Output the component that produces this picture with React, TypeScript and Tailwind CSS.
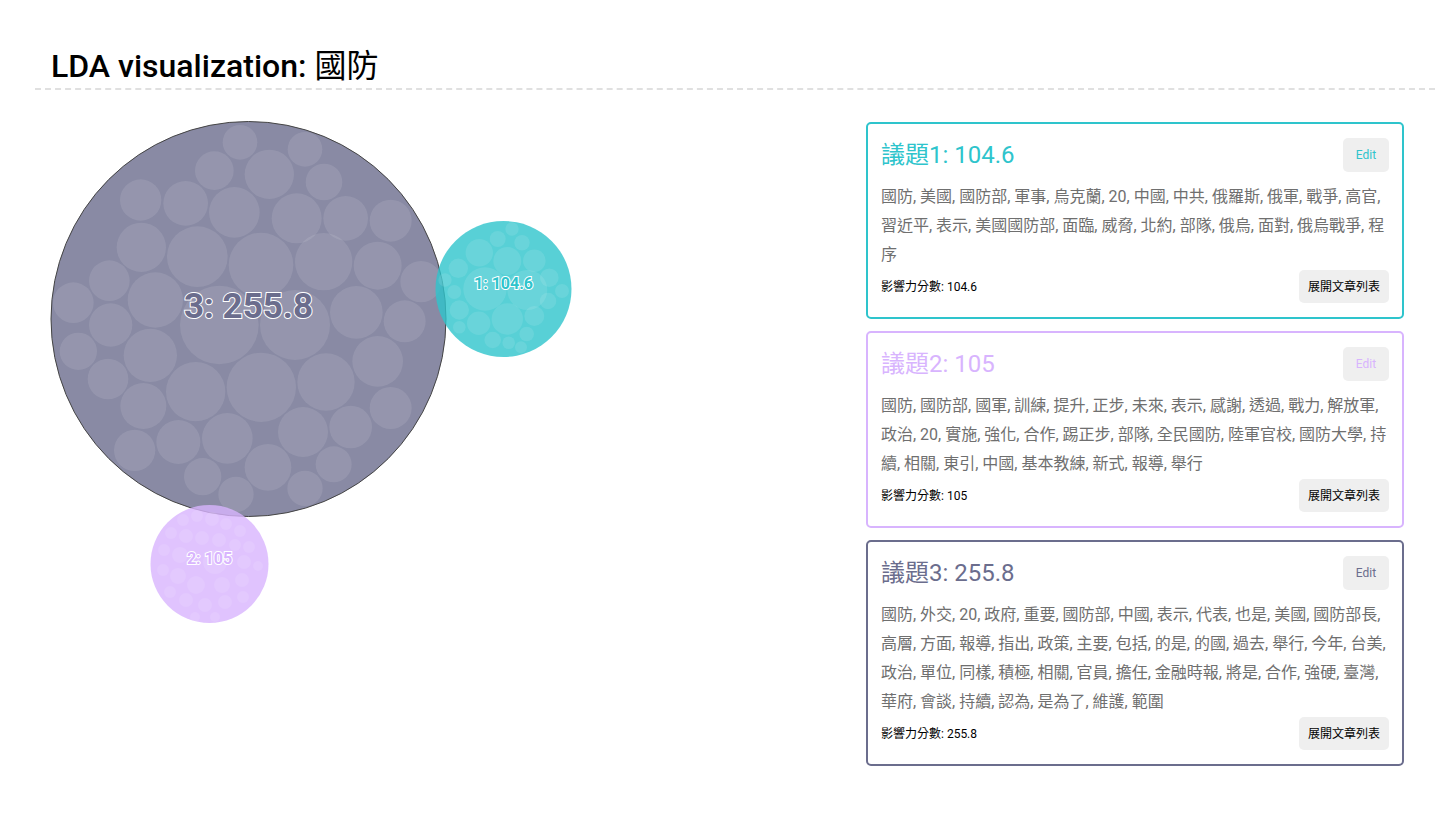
import React from 'react';

type Topic = {
  id: number;
  score: string;
  color: string;
  words: string;
};

const topics: Topic[] = [
  {
    id: 1,
    score: '104.6',
    color: '#2ec4cc',
    words:
      '國防, 美國, 國防部, 軍事, 烏克蘭, 20, 中國, 中共, 俄羅斯, 俄軍, 戰爭, 高官, 習近平, 表示, 美國國防部, 面臨, 威脅, 北約, 部隊, 俄烏, 面對, 俄烏戰爭, 程序',
  },
  {
    id: 2,
    score: '105',
    color: '#d8b4fe',
    words:
      '國防, 國防部, 國軍, 訓練, 提升, 正步, 未來, 表示, 感謝, 透過, 戰力, 解放軍, 政治, 20, 實施, 強化, 合作, 踢正步, 部隊, 全民國防, 陸軍官校, 國防大學, 持續, 相關, 東引, 中國, 基本教練, 新式, 報導, 舉行',
  },
  {
    id: 3,
    score: '255.8',
    color: '#6b6d8d',
    words:
      '國防, 外交, 20, 政府, 重要, 國防部, 中國, 表示, 代表, 也是, 美國, 國防部長, 高層, 方面, 報導, 指出, 政策, 主要, 包括, 的是, 的國, 過去, 舉行, 今年, 台美, 政治, 單位, 同樣, 積極, 相關, 官員, 擔任, 金融時報, 將是, 合作, 強硬, 臺灣, 華府, 會談, 持續, 認為, 是為了, 維護, 範圍',
  },
];

// inner circles of the big bubble, read off a 3x crop at (40,110)
const bigInner: [number, number, number][] = [
  [600, 97, 52], [795, 118, 52], [523, 182, 58], [688, 193, 74], [852, 216, 55],
  [302, 270, 62], [437, 280, 67], [583, 307, 76], [770, 325, 75], [917, 325, 67],
  [1052, 332, 63], [304, 412, 74], [472, 440, 91], [663, 465, 97], [851, 455, 86],
  [1013, 467, 72], [1143, 515, 62], [208, 512, 61], [346, 570, 83], [100, 578, 61],
  [212, 645, 65], [538, 645, 118], [765, 645, 105], [949, 607, 79], [1094, 634, 63],
  [115, 724, 56], [331, 736, 80], [1013, 754, 76], [204, 807, 61], [467, 845, 89],
  [664, 832, 104], [858, 816, 86], [1052, 894, 63], [310, 888, 69], [284, 1021, 62],
  [415, 996, 66], [562, 985, 76], [789, 966, 75], [932, 951, 64], [488, 1100, 56],
  [684, 1072, 70], [881, 1063, 54], [588, 1153, 53], [795, 1135, 53],
].map(([x, y, r]) => [40 + x / 3, 110 + y / 3, r / 3] as [number, number, number]);

const tealInner: [number, number, number][] = [
  [512, 229, 6.7], [497.7, 239, 8], [522, 242.7, 7.7], [479.3, 252.7, 13.7],
  [507.3, 261, 14], [534.3, 260.7, 11.3], [458.3, 268.3, 9.7], [549.3, 277.7, 9.3],
  [485, 289, 21.7], [527.3, 290, 20], [445, 280, 6.7], [454.3, 292, 7],
  [562, 291, 7], [548, 301, 8.3], [459.3, 310, 9.7], [478.7, 323.3, 11.7],
  [507.3, 319, 15.7], [534.3, 316, 10], [459.3, 327.3, 6.3], [526.7, 334, 7.3],
  [492.7, 340, 8.3], [508.7, 342.7, 6.3], [521, 347.3, 6],
];

const purpleInner: [number, number, number][] = [
  [183, 520, 6], [197, 516, 6], [212, 519, 7], [226, 524, 6], [240, 531, 6],
  [171, 533, 6], [186, 536, 7], [202, 538, 7], [219, 540, 7], [235, 545, 6],
  [249, 547, 6], [164, 550, 6], [180, 555, 8], [215, 562, 12], [244, 562, 7],
  [258, 566, 5], [163, 570, 6], [178, 576, 8], [196, 585, 9], [222, 585, 8],
  [242, 580, 7], [170, 592, 6], [186, 600, 7], [205, 605, 7], [225, 602, 7],
  [243, 597, 6], [195, 617, 5], [215, 617, 5],
];

const Bubble = ({
  cx,
  cy,
  r,
  color,
  inner,
  label,
  size,
  ty,
  stroke,
}: {
  cx: number;
  cy: number;
  r: number;
  color: string;
  inner: [number, number, number][];
  label: string;
  size: number;
  ty: number;
  stroke?: boolean;
}) => (
  <g>
    <circle
      cx={cx}
      cy={cy}
      r={r}
      fill={color}
      fillOpacity={0.8}
      stroke={stroke ? '#444' : 'none'}
      strokeWidth={1}
    />
    {inner.map(([x, y, rr], i) => (
      <circle key={i} cx={x} cy={y} r={rr} fill="#fff" fillOpacity={0.1} />
    ))}
    <text
      x={cx}
      y={ty}
      textAnchor="middle"
      fontFamily='Roboto, "Liberation Sans", Arial, sans-serif'
      fontWeight="bold"
      fontSize={size}
      fill={color}
      stroke="#fff"
      strokeWidth={2}
      paintOrder="stroke"
    >
      {label}
    </text>
  </g>
);

const TopicCard = ({ t }: { t: Topic }) => (
  <div
    className="rounded-[5px] border-2 bg-white px-[13px] py-[14px]"
    style={{ borderColor: t.color }}
  >
    <div className="flex items-center justify-between">
      <div className="text-[24px] leading-[30px]" style={{ color: t.color }}>
        議題{t.id}: {t.score}
      </div>
      <button
        className="h-[34px] w-[46px] rounded-[5px] bg-[#efefef] text-[12px]"
        style={{ color: t.color }}
      >
        Edit
      </button>
    </div>
    <p className="mt-[10px] text-[16px] leading-[29px] text-[#6f6f6f]">{t.words}</p>
    <div className="mt-[1px] flex items-center justify-between">
      <span className="text-[12px] text-black">影響力分數: {t.score}</span>
      <button className="h-[33px] rounded-[5px] bg-[#efefef] px-[9px] text-[12px] text-black">
        展開文章列表
      </button>
    </div>
  </div>
);

export default function App() {
  return (
    <div
      className="min-h-screen bg-white"
      style={{ fontFamily: 'Roboto, "Noto Sans CJK TC", sans-serif' }}
    >
      <div className="ml-[35px] w-[1400px]">
        <div className="border-b-2 border-dashed border-[#e0e0e0] pt-[47px] pb-[3px] pl-[16px]">
          <h2 className="text-[32px] font-medium leading-[38px] text-black">
            LDA visualization: <span className="font-normal">國防</span>
          </h2>
        </div>
        <div className="flex">
          <div className="w-[831px]">
            <svg width={831} height={560} viewBox="35 90 831 560" className="block">
              <Bubble
                cx={248.5}
                cy={319}
                r={197.5}
                color="#6b6d8d"
                inner={bigInner}
                label="3: 255.8"
                size={35}
                ty={318}
                stroke
              />
              <Bubble
                cx={503.5}
                cy={289}
                r={68}
                color="#2ec4cc"
                inner={tealInner}
                label="1: 104.6"
                size={16}
                ty={289}
              />
              <Bubble
                cx={209.5}
                cy={564}
                r={59}
                color="#d8b4fe"
                inner={purpleInner}
                label="2: 105"
                size={16}
                ty={564}
              />
            </svg>
          </div>
          <div className="flex w-[538px] flex-col gap-3 pt-[32px]">
            {topics.map((t) => (
              <TopicCard key={t.id} t={t} />
            ))}
          </div>
        </div>
      </div>
    </div>
  );
}
